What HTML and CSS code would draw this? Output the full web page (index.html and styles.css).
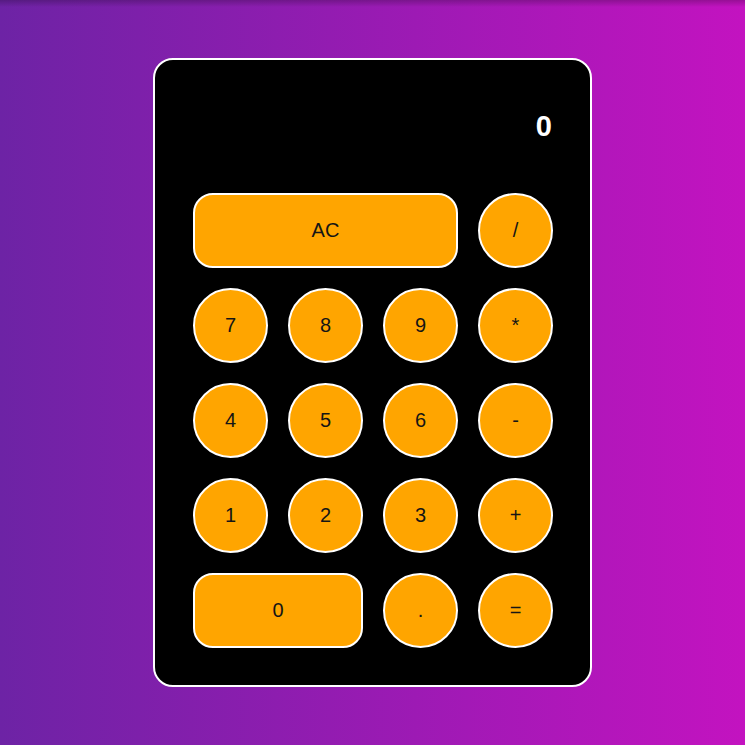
FILE: index.html
```html
<!DOCTYPE html>
<html>
<head>
<meta charset="utf-8">
<link rel="stylesheet" href="styles.css">
</head>
<body>
<div class="calc">
  <div class="display">0</div>
  <div class="keys">
    <button class="key wide span3">AC</button>
    <button class="key">/</button>
    <button class="key">7</button>
    <button class="key">8</button>
    <button class="key">9</button>
    <button class="key">*</button>
    <button class="key">4</button>
    <button class="key">5</button>
    <button class="key">6</button>
    <button class="key">-</button>
    <button class="key">1</button>
    <button class="key">2</button>
    <button class="key">3</button>
    <button class="key">+</button>
    <button class="key wide span2">0</button>
    <button class="key">.</button>
    <button class="key">=</button>
  </div>
</div>
</body>
</html>
```
FILE: styles.css
```css
html, body {
  margin: 0;
  height: 100%;
}
body {
  background:
    linear-gradient(to bottom, rgba(0,0,0,0.22), rgba(0,0,0,0) 7px),
    linear-gradient(to right, #6d23a5, #c313c0);
  display: flex;
  align-items: center;
  justify-content: center;
  font-family: "Liberation Sans", Arial, sans-serif;
}
.calc {
  box-sizing: border-box;
  width: 439px;
  background: #000;
  border: 2px solid #fff;
  border-radius: 20px;
  padding: 37px 37px 37.5px 38px;
}
.display {
  height: 60px;
  line-height: 58px;
  margin-bottom: 36px;
  padding-right: 1px;
  text-align: right;
  color: #fff;
  font-weight: bold;
  font-size: 29px;
}
.keys {
  display: grid;
  grid-template-columns: repeat(4, 75px);
  grid-auto-rows: 75px;
  gap: 20px;
}
.key {
  box-sizing: border-box;
  background: #ffa500;
  border: 2px solid #fff;
  border-radius: 50%;
  color: #151515;
  font-family: "Liberation Sans", Arial, sans-serif;
  font-size: 20px;
  padding: 0;
  margin: 0;
}
.wide { border-radius: 20px; }
.span3 { grid-column: span 3; }
.span2 { grid-column: span 2; }
```
